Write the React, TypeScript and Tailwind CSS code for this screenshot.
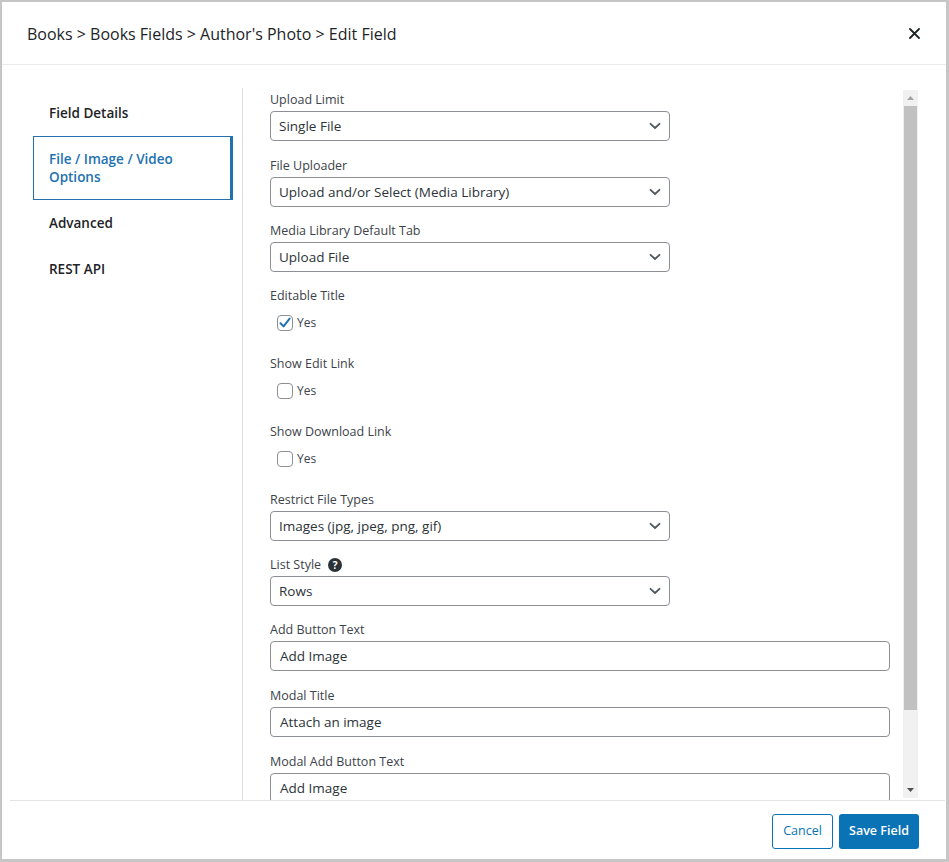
import React from "react";

const font = { fontFamily: '"Open Sans", "Noto Sans", sans-serif' };

function Chevron() {
  return (
    <svg width="12" height="8" viewBox="0 0 12 8" className="absolute right-[8px] top-1/2 -translate-y-1/2">
      <path d="M1.5 1.8 L6 6 L10.5 1.8" fill="none" stroke="#50575e" strokeWidth="1.8" strokeLinecap="round" strokeLinejoin="round" />
    </svg>
  );
}

function Label({ children }: { children: React.ReactNode }) {
  return <div className="text-[12.5px] leading-[22px] text-[#3c434a] flex items-center">{children}</div>;
}

function SelectField({ label, value, help, first }: { label: string; value: string; help?: boolean; first?: boolean }) {
  return (
    <div className={first ? "mb-[14px]" : "mb-[13px]"}>
      <Label>
        {label}
        {help && (
          <span className="ml-[7px] inline-flex w-[14px] h-[14px] rounded-full bg-[#2c3338] text-white text-[10px] font-bold items-center justify-center leading-none">?</span>
        )}
      </Label>
      <div className="relative w-[400px] h-[30px] border border-[#8c8f94] rounded-[4px] bg-white flex items-center pl-[8px] text-[13.5px] text-[#2c3338]">
        {value}
        <Chevron />
      </div>
    </div>
  );
}

function TextField({ label, value }: { label: string; value: string }) {
  return (
    <div className="mb-[14px]">
      <Label>{label}</Label>
      <div className="w-[620px] h-[30px] border border-[#8c8f94] rounded-[4px] bg-white flex items-center pl-[9px] text-[13.5px] text-[#2c3338]">
        {value}
      </div>
    </div>
  );
}

function CheckField({ label, checked }: { label: string; checked?: boolean }) {
  return (
    <div className="mb-[14px]">
      <Label>{label}</Label>
      <div className="h-[32px] flex items-center pl-[7px]">
        <span className="w-[16px] h-[16px] border border-[#8c8f94] rounded-[4px] bg-white flex items-center justify-center">
          {checked && (
            <svg width="14" height="14" viewBox="0 0 14 14">
              <path d="M2.5 7.2 L5.6 10.4 L11.6 2.6" fill="none" stroke="#2271b1" strokeWidth="2" strokeLinecap="round" strokeLinejoin="round" />
            </svg>
          )}
        </span>
        <span className="ml-[4px] text-[12px] text-[#3c434a]">Yes</span>
      </div>
    </div>
  );
}

export default function App() {
  return (
    <div style={font} className="w-[949px] h-[862px] bg-white">
      <div className="w-[949px] h-[862px] border-2 border-[#c6c6c6] border-r-[3px] border-b-[3px] flex flex-col bg-white">
        {/* Header */}
        <div className="h-[63px] shrink-0 border-b border-[#ebebeb] flex items-center pl-[25px] pr-[24px] pt-[1px]">
          <div className="text-[16px] text-[#1d2327]">
            Books &gt; Books Fields &gt; Author's Photo &gt; Edit Field
          </div>
          <div className="ml-auto flex items-center justify-center w-[16px] h-[16px]">
            <svg width="11" height="11" viewBox="0 0 11 11">
              <path d="M1 1 L10 10 M10 1 L1 10" stroke="#1d2327" strokeWidth="1.8" strokeLinecap="round" />
            </svg>
          </div>
        </div>

        {/* Body */}
        <div className="flex h-[735px] shrink-0">
          <div className="w-[241px] shrink-0 mt-[23px] border-r border-[#dcdcde] pt-[2px]">
            <div className="ml-[31px] mr-[9px] flex flex-col">
              <div className="px-[15px] py-[13px] border border-transparent text-[13.5px] leading-[18px] font-semibold text-[#1d2327]">Field Details</div>
              <div className="pl-[15px] pr-[12px] py-[13px] border border-[#2271b1] border-r-[3px] text-[13.5px] leading-[18px] font-semibold text-[#2271b1]">
                File / Image / Video
                <br />
                Options
              </div>
              <div className="px-[15px] py-[13px] border border-transparent text-[13.5px] leading-[18px] font-semibold text-[#1d2327]">Advanced</div>
              <div className="px-[15px] py-[13px] border border-transparent text-[13.5px] leading-[18px] font-semibold text-[#1d2327]">REST API</div>
            </div>
          </div>

          <div className="flex mt-[23px] h-[712px]">
            <div className="w-[660px] h-[712px] overflow-hidden pl-[27px] pt-[1px]">
              <SelectField label="Upload Limit" value="Single File" first />
              <SelectField label="File Uploader" value="Upload and/or Select (Media Library)" />
              <SelectField label="Media Library Default Tab" value="Upload File" />
              <CheckField label="Editable Title" checked />
              <CheckField label="Show Edit Link" />
              <CheckField label="Show Download Link" />
              <SelectField label="Restrict File Types" value="Images (jpg, jpeg, png, gif)" />
              <SelectField label="List Style" value="Rows" help />
              <TextField label="Add Button Text" value="Add Image" />
              <TextField label="Modal Title" value="Attach an image" />
              <TextField label="Modal Add Button Text" value="Add Image" />
            </div>
            {/* Scrollbar */}
            <div className="w-[15px] mt-[2px] h-[708px] bg-[#f1f1f1] flex flex-col">
              <div className="h-[16px] flex items-center justify-center">
                <svg width="7" height="4" viewBox="0 0 7 4"><path d="M0 4 L3.5 0 L7 4 Z" fill="#a3a3a3" /></svg>
              </div>
              <div className="mx-[1px] h-[604px] bg-[#c1c1c1]" />
              <div className="flex-1" />
              <div className="h-[16px] flex items-center justify-center">
                <svg width="7" height="4" viewBox="0 0 7 4"><path d="M0 0 L7 0 L3.5 4 Z" fill="#505050" /></svg>
              </div>
            </div>
          </div>
        </div>

        {/* Footer */}
        <div className="flex-1 ml-[8px] mr-[1px] border-t border-[#e5e5e5] flex justify-end items-start pt-[13px] pr-[26px] gap-[6px]">
          <button className="w-[61px] h-[35px] border border-[#0a73b5] rounded-[3px] bg-white text-[12.5px] text-[#0a73b5]">Cancel</button>
          <button className="w-[80px] h-[35px] rounded-[3px] bg-[#0a73b5] text-[12.5px] font-semibold text-white">Save Field</button>
        </div>
      </div>
    </div>
  );
}
